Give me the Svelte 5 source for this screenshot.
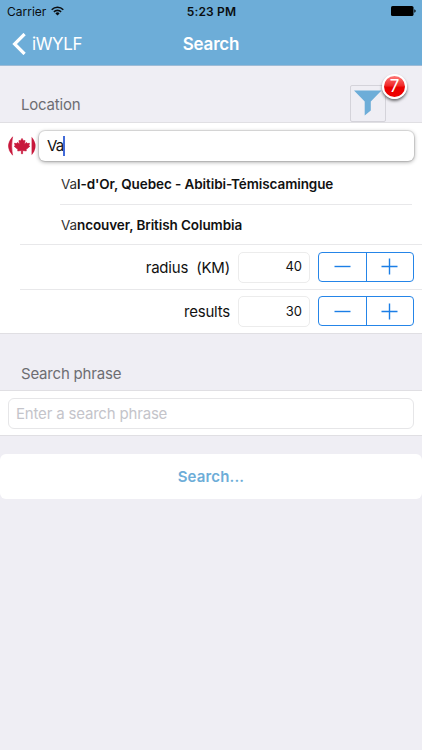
<script>
  let query = "Va";
  let phrase = "";
  let filterCount = 7;

  let places = [
    "Val-d'Or, Quebec - Abitibi-Témiscamingue",
    "Vancouver, British Columbia",
  ];

  let steppers = [
    { key: "radius", label: "radius\u00a0 (KM)", value: 40, step: 5 },
    { key: "results", label: "results", value: 30, step: 5 },
  ];

  function change(i, dir) {
    const s = steppers[i];
    s.value = Math.max(0, s.value + dir * s.step);
    steppers = steppers;
  }
</script>

<div class="screen">
  <header>
    <div class="status">
      <div class="carrier">
        <span>Carrier</span>
        <svg width="13" height="10" viewBox="0 0 13 10">
          <g fill="none" stroke="#0a0d10" stroke-width="1.6">
            <path d="M0.7 3.7a8.2 8.2 0 0 1 11.6 0" />
            <path d="M2.9 5.9a5.1 5.1 0 0 1 7.2 0" />
          </g>
          <path d="M6.5 9.6L4.4 7.4a3 3 0 0 1 4.2 0z" fill="#0a0d10" />
        </svg>
      </div>
      <div class="time">5:23 PM</div>
      <svg class="battery" width="25" height="10" viewBox="0 0 25 10">
        <rect x="0" y="0" width="22.5" height="10" rx="1.6" />
        <path d="M23.3 3.3q1.4 .4 1.4 1.7t-1.4 1.7z" />
      </svg>
    </div>
    <nav>
      <div class="back">
        <svg width="14" height="22" viewBox="0 0 14 22">
          <path
            d="M12.6 1L2.6 11l10 10"
            fill="none"
            stroke="#fff"
            stroke-width="3.2"
          />
        </svg>
        <span>iWYLF</span>
      </div>
      <h1>Search</h1>
    </nav>
  </header>

  <div class="section-head">
    <span>Location</span>
    <button class="filter" aria-label="Filters">
      <svg width="28" height="26" viewBox="0 0 28 26">
        <path d="M0 .5h27.5L16.8 11.5v9L10.7 25.5v-14z" fill="#6dadd8" />
      </svg>
      <span class="badge">{filterCount}</span>
    </button>
  </div>

  <div class="group">
    <div class="location">
      <svg class="flag" width="28" height="20" viewBox="0 0 28 20">
        <path d="M4.6 .8Q-3.8 10 4.6 19.2Q2.8 10 4.6 .8z" fill="#c8193c" stroke="#c8193c" stroke-width="0.5" />
        <path d="M23.6 .8Q31.4 10 23.6 19.2z" fill="#c8193c" />
        <path
          d="M14 2.4l1.6 2.6 1.4-.6-.4 3.8 2-1.7.6 1.1 2.3-.3-.7 2.3 1 .7-3.8 3.3.3 1.3-3.7-.4v3.2h-1.2v-3.2l-3.7.4.3-1.3L6.200 10.300l1-.7-.7-2.300 2.300.300.600-1.100 2 1.700-.400-3.800 1.400.600z"
          fill="#c8193c"
          stroke="#c8193c"
          stroke-width="0.7"
        />
      </svg>
      <div class="entry"><span>{query}</span><i class="caret"></i></div>
    </div>

    <ul class="places">
      {#each places as place}
        <li>
          <span>{place.slice(0, query.length)}</span><b
            >{place.slice(query.length)}</b
          >
        </li>
      {/each}
    </ul>

    {#each steppers as s, i}
      <div class="row">
        <label for={s.key}>{s.label}</label>
        <input id={s.key} type="text" bind:value={s.value} />
        <div class="stepper">
          <button aria-label="Less" on:click={() => change(i, -1)}>
            <svg width="17" height="17" viewBox="0 0 17 17">
              <path d="M.5 8.5h16" />
            </svg>
          </button>
          <button aria-label="More" on:click={() => change(i, 1)}>
            <svg width="17" height="17" viewBox="0 0 17 17">
              <path d="M.5 8.5h16M8.5 .5v16" />
            </svg>
          </button>
        </div>
      </div>
    {/each}
  </div>

  <div class="section-head phrase-head">
    <span>Search phrase</span>
  </div>
  <div class="group phrase">
    <input
      type="text"
      placeholder="Enter a search phrase"
      bind:value={phrase}
    />
  </div>

  <button class="submit">Search...</button>
</div>

<style>
  :global(body) {
    background: #efeef4;
  }
  * {
    box-sizing: border-box;
  }
  .screen {
    width: 422px;
    height: 750px;
    overflow: hidden;
    background: #efeef4;
    color: #111;
    font-family: Inter, "Liberation Sans", sans-serif;
  }
  svg {
    display: block;
  }
  button,
  input {
    font-family: inherit;
    margin: 0;
  }

  header {
    height: 66px;
    background: #6dadd8;
    border-bottom: 1px solid #9dbbd6;
  }
  .status {
    display: grid;
    grid-template-columns: 1fr auto 1fr;
    align-items: center;
    height: 22px;
    padding: 0 6px 0 7px;
    font-size: 12px;
    color: #0a0d10;
  }
  .carrier {
    display: flex;
    align-items: center;
    gap: 5px;
  }
  .time {
    font-weight: 600;
    letter-spacing: 0.15px;
  }
  .battery {
    justify-self: end;
    fill: #000;
  }
  nav {
    display: grid;
    grid-template-columns: 1fr auto 1fr;
    align-items: center;
    height: 43px;
    padding: 0 12px;
    color: #fff;
  }
  .back {
    display: flex;
    align-items: center;
    gap: 6px;
    font-size: 17px;
    letter-spacing: -0.4px;
  }
  h1 {
    margin: 0;
    font-size: 17px;
    font-weight: 600;
    letter-spacing: -0.2px;
  }

  .section-head {
    display: flex;
    justify-content: space-between;
    height: 56px;
    padding: 19px 36px 0 21px;
    font-size: 15px;
    letter-spacing: -0.2px;
    color: #6d6d72;
  }
  .section-head > span {
    line-height: 20px;
    margin-top: 10px;
  }
  .filter {
    position: relative;
    width: 36px;
    height: 37px;
    padding: 0 0 2px 3px;
    border: 1px solid #d4d3da;
    border-radius: 2px;
    background: none;
  }
  .badge {
    position: absolute;
    top: -12px;
    right: -22px;
    width: 25px;
    height: 25px;
    border: 2px solid #fff;
    border-radius: 50%;
    background: linear-gradient(#f77 0%, #f02a2a 45%, #e80000 55%, #f00000);
    box-shadow: 0 2px 3px rgba(0, 0, 0, 0.55);
    color: #fff;
    font-size: 17px;
    line-height: 21px;
    text-align: center;
  }

  .group {
    background: #fff;
    border-top: 1px solid #e0dfe3;
    border-bottom: 1px solid #e0dfe3;
  }
  .location {
    display: flex;
    align-items: center;
    gap: 3px;
    height: 41px;
    padding: 4px 8px 0;
  }
  .flag {
    margin-top: 1px;
  }
  .entry {
    display: flex;
    flex: 1;
    align-items: center;
    height: 30px;
    padding-left: 8px;
    border-radius: 6px;
    background: #fff;
    box-shadow:
      0 0 0 1px rgba(0, 0, 0, 0.08),
      0 1px 4px rgba(0, 0, 0, 0.38);
    font-size: 15px;
    letter-spacing: -0.9px;
  }
  .caret {
    width: 2px;
    height: 20px;
    background: #426bd8;
  }

  .places {
    list-style: none;
    margin: 0;
    padding: 0 10px 0 60px;
  }
  .places li {
    height: 40px;
    line-height: 40px;
    padding-left: 1px;
    font-size: 13.5px;
    letter-spacing: -0.09px;
    white-space: nowrap;
  }
  .places li + li {
    border-top: 1px solid #e8e8ea;
  }
  .places span {
    color: #333;
  }
  .places b {
    font-weight: 600;
  }

  .row {
    display: flex;
    align-items: center;
    justify-content: flex-end;
    height: 44.5px;
    margin-left: 20px;
    padding-right: 8px;
    border-top: 1px solid #e8e8ea;
  }
  .row label {
    margin-top: 1px;
    margin-right: 8px;
    font-size: 15px;
    letter-spacing: -0.2px;
  }
  .row input {
    width: 72px;
    height: 31px;
    margin-top: 1px;
    margin-right: 8px;
    padding: 0 7px 2px;
    border: 1px solid #ececec;
    border-radius: 5px;
    font-size: 13px;
    text-align: right;
    color: #111;
  }
  .stepper {
    display: flex;
    width: 96px;
    height: 30px;
    border: 1px solid #2585e8;
    border-radius: 4px;
  }
  .stepper button {
    display: flex;
    flex: 1;
    align-items: center;
    justify-content: center;
    padding: 0;
    border: 0;
    background: none;
  }
  .stepper button + button {
    border-left: 1px solid #2585e8;
  }
  .stepper path {
    stroke: #1b7ee6;
    stroke-width: 1.4;
  }

  .phrase-head {
    height: 56px;
  }
  .phrase-head > span {
    margin-top: 11px;
  }
  .phrase {
    height: 45.5px;
    padding: 7px 8px;
  }
  .phrase input {
    display: block;
    width: 100%;
    height: 31px;
    padding: 0 7px;
    border: 1px solid #e6e6e8;
    border-radius: 6px;
    font-size: 15px;
    letter-spacing: -0.18px;
  }
  .phrase input::placeholder {
    color: #c4c4ca;
  }
  .submit {
    display: block;
    width: 100%;
    height: 45px;
    margin-top: 18px;
    border: 0;
    border-radius: 6px;
    background: #fff;
    color: #6dadd8;
    font-size: 15px;
    font-weight: 600;
    letter-spacing: 0.15px;
  }
</style>
